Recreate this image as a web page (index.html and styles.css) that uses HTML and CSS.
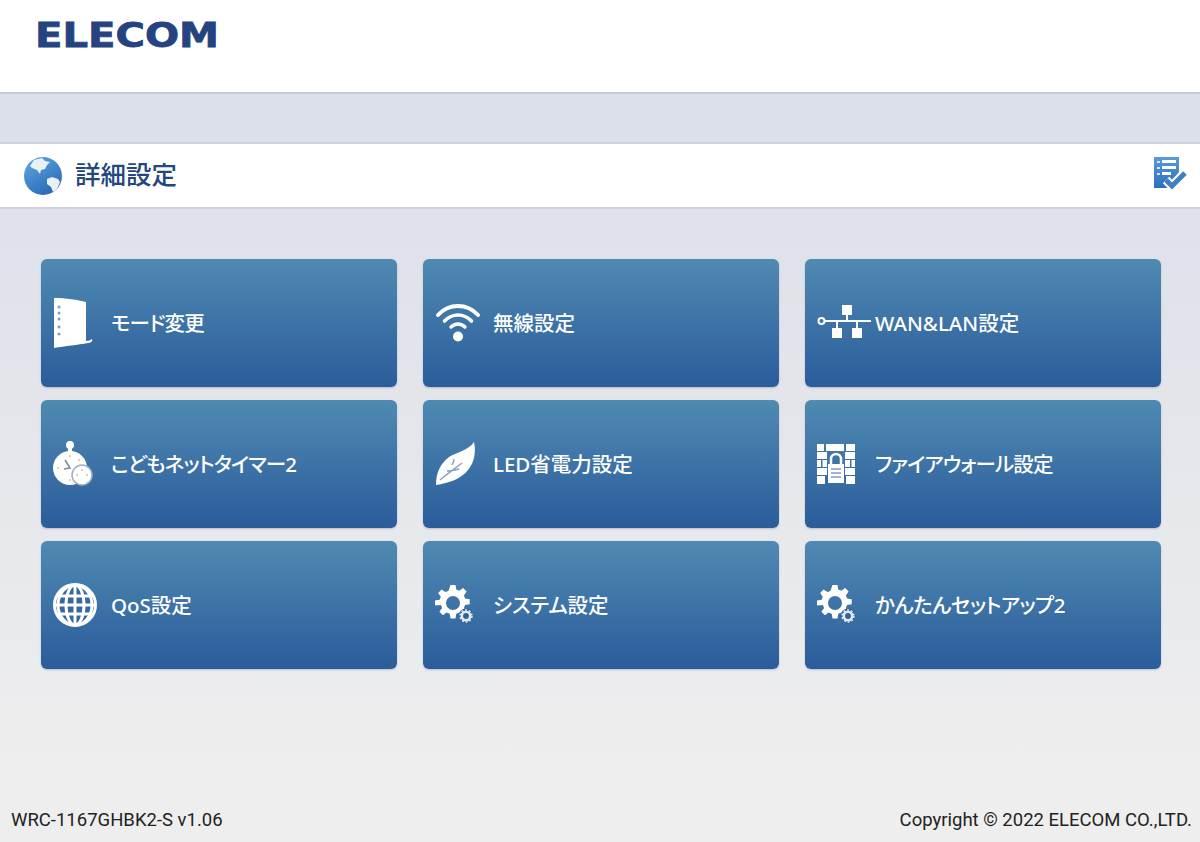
FILE: index.html
```html
<!DOCTYPE html>
<html lang="ja">

<head>
    <meta charset="UTF-8">
    <title>詳細設定</title>
    <link rel="stylesheet" href="styles.css">
</head>

<body>
    <svg width="0" height="0" class="defs">
        <defs>
            <g id="gear">
                <path fill="#fff" fill-rule="evenodd" d="M15.500 0h5l.8 4.600 3 1.200 3.800-2.700 3.500 3.500-2.700 3.800 1.200 3 4.600.8v5l-4.600.8-1.200 3 2.700 3.800-3.500 3.500-3.800-2.700-3 1.200-.8 4.600h-5l-.8-4.600-3-1.200-3.800 2.700-3.500-3.500 2.700-3.800-1.200-3L0 20.500v-5l4.600-.8 1.200-3L3.100 7.900 6.600 4.400l3.800 2.700 3-1.200zM18 11a7 7 0 1 0 0 14 7 7 0 0 0 0-14z" />
                <circle cx="31" cy="31" r="7.500" fill="#2f6299" />
                <circle cx="31" cy="31" r="4.200" fill="none" stroke="#e3e8ef" stroke-width="2.600" />
                <circle cx="31" cy="31" r="6" fill="none" stroke="#e3e8ef" stroke-width="1.500" stroke-dasharray="2 1.800" />
            </g>
        </defs>
    </svg>

    <header class="top">
        <svg class="logo" width="188" height="46" viewBox="0 0 188 46">
            <text x="0" y="36" textLength="184" lengthAdjust="spacingAndGlyphs">ELECOM</text>
        </svg>
    </header>

    <div class="band"></div>

    <div class="title-bar">
        <div class="title-left">
            <svg width="40" height="40" viewBox="0 0 40 40">
                <defs>
                    <linearGradient id="sea" x1="0" y1="0" x2="0.6" y2="1">
                        <stop offset="0" stop-color="#62a8e4" />
                        <stop offset="1" stop-color="#2a6cb6" />
                    </linearGradient>
                </defs>
                <circle cx="20" cy="20" r="19" fill="url(#sea)" />
                <path fill="#e8f0f8" d="M11 4l8-2 3 3 5 1-3 3-2 4-4 1-1 4-3-4-5-2-2-2z" />
                <path fill="#e8f0f8" d="M24 23l5-2 6 2 2 3-3 7-4 3-2-5-4-3z" />
            </svg>
            <h1>詳細設定</h1>
        </div>
        <svg class="check" width="38" height="36" viewBox="0 0 38 36">
            <defs>
                <linearGradient id="sheet" x1="0" y1="0" x2="0" y2="1">
                    <stop offset="0" stop-color="#5b9bd8" />
                    <stop offset="1" stop-color="#2b6fbd" />
                </linearGradient>
            </defs>
            <path fill="url(#sheet)" d="M1 2h25v15l-12 16H1z" />
            <g fill="#d8e6f5">
                <rect x="4" y="6" width="3" height="2" />
                <rect x="4" y="12" width="3" height="2" />
                <rect x="4" y="18" width="3" height="2" />
            </g>
            <g fill="#fff">
                <rect x="9" y="5" width="14" height="3" />
                <rect x="9" y="11" width="14" height="3" />
                <rect x="9" y="17" width="9" height="3" />
            </g>
            <path fill="none" stroke="#fff" stroke-width="9" d="M13 25l6 6 13-13" />
            <path fill="none" stroke="#3f7fc4" stroke-width="5" d="M13 25l6 6 13-13" />
        </svg>
    </div>

    <main class="menu">
        <a class="tile" href="#">
            <span class="ico">
                <svg width="40" height="52" viewBox="0 0 40 52">
                    <path fill="#fff" d="M1 1c12 0 24 2 32 4v39c2 0 5-1 6-2 1 2-1 4-4 4-10 2-23 3-34 5z" />
                    <g fill="#7f9fc2">
                        <circle cx="6" cy="10" r="1.500" />
                        <circle cx="6" cy="16" r="1.500" />
                        <circle cx="6" cy="22" r="1.500" />
                        <circle cx="6" cy="30" r="1.500" />
                        <circle cx="6" cy="37" r="1.500" />
                    </g>
                </svg>
            </span>
            <span class="label tight">モード変更</span>
        </a>
        <a class="tile" href="#">
            <span class="ico">
                <svg width="46" height="40" viewBox="0 0 46 40">
                    <g fill="none" stroke="#fff" stroke-linecap="round">
                        <path stroke-width="4" d="M3 12C14 0 32 0 43 12" />
                        <path stroke-width="3.600" d="M9.500 18c8-8 19-8 27 0" />
                        <path stroke-width="3.400" d="M16 24c4-4 10-4 14 0" />
                    </g>
                    <circle cx="23" cy="33.500" r="5" fill="#fff" />
                </svg>
            </span>
            <span class="label">無線設定</span>
        </a>
        <a class="tile" href="#">
            <span class="ico">
                <svg width="54" height="36" viewBox="0 0 54 36">
                    <circle cx="4.500" cy="16" r="3" fill="none" stroke="#fff" stroke-width="2" />
                    <path fill="none" stroke="#fff" stroke-width="2" d="M8 16h46M30 8v8M20 16v8M40 16v8" />
                    <rect x="25" y="0" width="10" height="10" fill="#fff" />
                    <rect x="15" y="23" width="10" height="10" fill="#fff" />
                    <rect x="35" y="23" width="10" height="10" fill="#fff" />
                </svg>
            </span>
            <span class="label">WAN&amp;LAN設定</span>
        </a>
        <a class="tile" href="#">
            <span class="ico">
                <svg width="40" height="46" viewBox="0 0 40 46">
                    <circle cx="17" cy="4" r="4" fill="#fff" />
                    <rect x="15" y="6" width="4" height="6" fill="#fff" />
                    <circle cx="17" cy="27" r="17" fill="#fff" />
                    <path fill="none" stroke="#7d8b9c" stroke-width="1.500" d="M12 19l5 8-6 1" />
                    <g fill="#e9b9a0">
                        <circle cx="17" cy="15" r="1" />
                        <circle cx="5" cy="27" r="1" />
                        <circle cx="17" cy="39" r="1" />
                        <circle cx="26" cy="19" r="1" />
                    </g>
                    <circle cx="29" cy="34" r="10" fill="#fff" stroke="#9fb1c6" stroke-width="1.500" />
                    <g fill="#e9b9a0">
                        <circle cx="29" cy="29" r="1" />
                        <circle cx="24" cy="34" r="1" />
                        <circle cx="34" cy="34" r="1" />
                    </g>
                </svg>
            </span>
            <span class="label tight">こどもネットタイマー2</span>
        </a>
        <a class="tile" href="#">
            <span class="ico">
                <svg width="42" height="44" viewBox="0 0 42 44">
                    <path fill="#fff" d="M39 0c2 8 1 20-6 28C26 37 14 41 1 43c0-12 4-21 13-28C22 10 34 8 39 0z" />
                    <path fill="none" stroke="#8aa5c4" stroke-width="1.500" d="M5 38C12 32 18 28 27 21M12 29c4 0 8-1 12-2M17 23c1-2 2-4 2-6" />
                </svg>
            </span>
            <span class="label">LED省電力設定</span>
        </a>
        <a class="tile" href="#">
            <span class="ico">
                <svg width="38" height="40" viewBox="0 0 38 40">
                    <path fill="#fff" d="M0 0h7v7H0zM9 0h18v7H9zM29 0h9v7h-9zM0 8h10v7H0zM28 8h10v7H28zM0 16h4v7H0zM5.500 16H10v7H5.500zM28 16h5v7h-5zM34.500 16H38v7h-3.500zM0 24h10v7H0zM28 24h10v7H28zM0 32h8v8H0zM29 32h9v8h-9z" />
                    <path fill="none" stroke="#fff" stroke-width="2.500" d="M14 20v-5a5 5 0 0 1 10 0v5" />
                    <rect x="11" y="20" width="16" height="19" fill="#fff" />
                    <path stroke="#7f9fc2" stroke-width="1.500" d="M14 25h10M14 29h10M14 33h10" />
                </svg>
            </span>
            <span class="label tight">ファイアウォール設定</span>
        </a>
        <a class="tile" href="#">
            <span class="ico">
                <svg width="44" height="44" viewBox="0 0 44 44">
                    <circle cx="22" cy="22" r="21" fill="#34689f" />
                    <g fill="none" stroke="#fff" stroke-width="3">
                        <ellipse cx="22" cy="22" rx="9" ry="20" />
                        <path d="M22 2v40M4 13h36M2 22h40M4 31h36" />
                        <ellipse cx="22" cy="22" rx="17" ry="20" />
                    </g>
                    <circle cx="22" cy="22" r="20.500" fill="none" stroke="#fff" stroke-width="3" />
                </svg>
            </span>
            <span class="label">QoS設定</span>
        </a>
        <a class="tile" href="#">
            <span class="ico">
                <svg width="40" height="40" viewBox="0 0 40 40">
                    <use href="#gear" />
                </svg>
            </span>
            <span class="label">システム設定</span>
        </a>
        <a class="tile" href="#">
            <span class="ico">
                <svg width="40" height="40" viewBox="0 0 40 40">
                    <use href="#gear" />
                </svg>
            </span>
            <span class="label snug">かんたんセットアップ2</span>
        </a>
    </main>

    <footer class="foot">
        <span>WRC-1167GHBK2-S v1.06</span>
        <span>Copyright © 2022 ELECOM CO.,LTD.</span>
    </footer>
</body>

</html>
```

FILE: styles.css
```css
* {
    margin: 0;
    padding: 0;
    box-sizing: border-box;
}

html,
body {
    height: 842px;
    overflow: hidden;
}

body {
    display: flex;
    flex-direction: column;
    font-family: "Noto Sans", "Noto Sans CJK JP", sans-serif;
    background: linear-gradient(#dce0e9 0, #dfe2ea 250px, #eeeeee 780px);
    color: #222;
}

.defs {
    position: absolute;
}

/* Header */
.top {
    height: 94px;
    padding: 11px 0 0 35px;
    background-color: #fff;
    border-bottom: 2px solid #c9cdd5;
}

.logo text {
    font-family: "DejaVu Sans", sans-serif;
    font-weight: 700;
    font-size: 34px;
    fill: #25437f;
    stroke: #25437f;
    stroke-width: 0.8;
}

.band {
    height: 48px;
    background-color: #dce0e9;
}

/* Title bar */
.title-bar {
    height: 67px;
    padding: 0 9px 0 23px;
    display: flex;
    justify-content: space-between;
    align-items: center;
    background-color: #fff;
    border-top: 2px solid #cfd2d9;
    border-bottom: 2px solid #cfd2d9;
}

.title-left {
    display: flex;
    align-items: center;
    gap: 12px;
}

.title-left h1 {
    margin-bottom: 7px;
    font-size: 25.5px;
    font-weight: 500;
    color: #23477f;
}

.check {
    margin-bottom: 6px;
}

/* Menu */
.menu {
    display: grid;
    grid-template-columns: repeat(3, 356px);
    grid-auto-rows: 128px;
    column-gap: 26px;
    row-gap: 13px;
    padding: 50px 0 0 41px;
}

.tile {
    display: flex;
    align-items: center;
    padding-left: 12px;
    background: linear-gradient(#4f8ab2, #2b5c9b);
    border-radius: 6px;
    box-shadow: 0 1px 2px rgba(80, 90, 120, 0.3);
    color: #fff;
    text-decoration: none;
}

.ico {
    width: 59px;
    display: flex;
    align-items: center;
    flex-shrink: 0;
}

.label {
    margin-bottom: 2px;
    margin-left: -1px;
    font-size: 20.5px;
    font-weight: 500;
    font-feature-settings: "palt";
}

.tight {
    letter-spacing: -0.8px;
}

.snug {
    letter-spacing: -0.45px;
}

/* Footer */
.foot {
    margin-top: auto;
    height: 45px;
    padding: 0 8px 0 11px;
    display: flex;
    justify-content: space-between;
    font-family: "Roboto", "Liberation Sans", sans-serif;
    font-size: 18.5px;
    line-height: 47px;
}
```
